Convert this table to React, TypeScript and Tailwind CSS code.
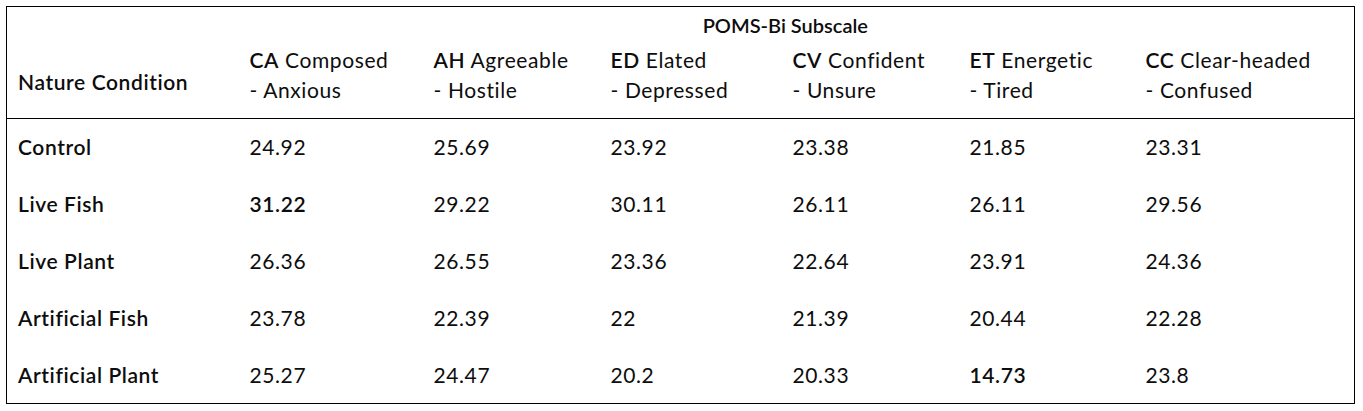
const subscales = [
  { code: 'CA', top: 'Composed', bottom: '- Anxious' },
  { code: 'AH', top: 'Agreeable', bottom: '- Hostile' },
  { code: 'ED', top: 'Elated', bottom: '- Depressed' },
  { code: 'CV', top: 'Confident', bottom: '- Unsure' },
  { code: 'ET', top: 'Energetic', bottom: '- Tired' },
  { code: 'CC', top: 'Clear-headed', bottom: '- Confused' },
];

// values with a leading "*" are shown in bold
const rows: { name: string; values: string[] }[] = [
  { name: 'Control', values: ['24.92', '25.69', '23.92', '23.38', '21.85', '23.31'] },
  { name: 'Live Fish', values: ['*31.22', '29.22', '30.11', '26.11', '26.11', '29.56'] },
  { name: 'Live Plant', values: ['26.36', '26.55', '23.36', '22.64', '23.91', '24.36'] },
  { name: 'Artificial Fish', values: ['23.78', '22.39', '22', '21.39', '20.44', '22.28'] },
  { name: 'Artificial Plant', values: ['25.27', '24.47', '20.2', '20.33', '*14.73', '23.8'] },
];

const colWidths = ['w-[232px]', 'w-[184px]', 'w-[177px]', 'w-[182px]', 'w-[177px]', 'w-[176px]', 'w-[220px]'];

export default function App() {
  return (
    <div className="min-h-[411px] bg-white pl-[6px] pt-[6px] font-['Lato',sans-serif] text-[21px] leading-[30px] tracking-[0.6px] text-[#0d0d0d]">
      <table className="w-[1349px] table-fixed border-collapse border border-black">
        <colgroup>
          {colWidths.map((w) => (
            <col key={w} className={w} />
          ))}
        </colgroup>
        <thead>
          <tr className="h-[37px]">
            <th />
            <th
              colSpan={6}
              className="pr-[22px] text-center align-middle text-[20px] font-semibold tracking-normal"
            >
              POMS-Bi Subscale
            </th>
          </tr>
          <tr className="h-[75px] border-b border-black">
            <th className="px-[11px] pt-[3px] text-left align-middle font-semibold">Nature Condition</th>
            {subscales.map((s) => (
              <th key={s.code} className="px-[11px] pb-[13px] text-left align-bottom font-normal">
                <div>
                  <span className="font-semibold">{s.code}</span> {s.top}
                </div>
                <div>{s.bottom}</div>
              </th>
            ))}
          </tr>
        </thead>
        <tbody>
          {rows.map((r) => (
            <tr key={r.name} className="h-[57px]">
              <td className="px-[11px] align-middle font-semibold">{r.name}</td>
              {r.values.map((v, i) => (
                <td
                  key={i}
                  className={v.startsWith('*') ? 'px-[11px] align-middle font-semibold' : 'px-[11px] align-middle'}
                >
                  {v.replace('*', '')}
                </td>
              ))}
            </tr>
          ))}
        </tbody>
      </table>
    </div>
  );
}
